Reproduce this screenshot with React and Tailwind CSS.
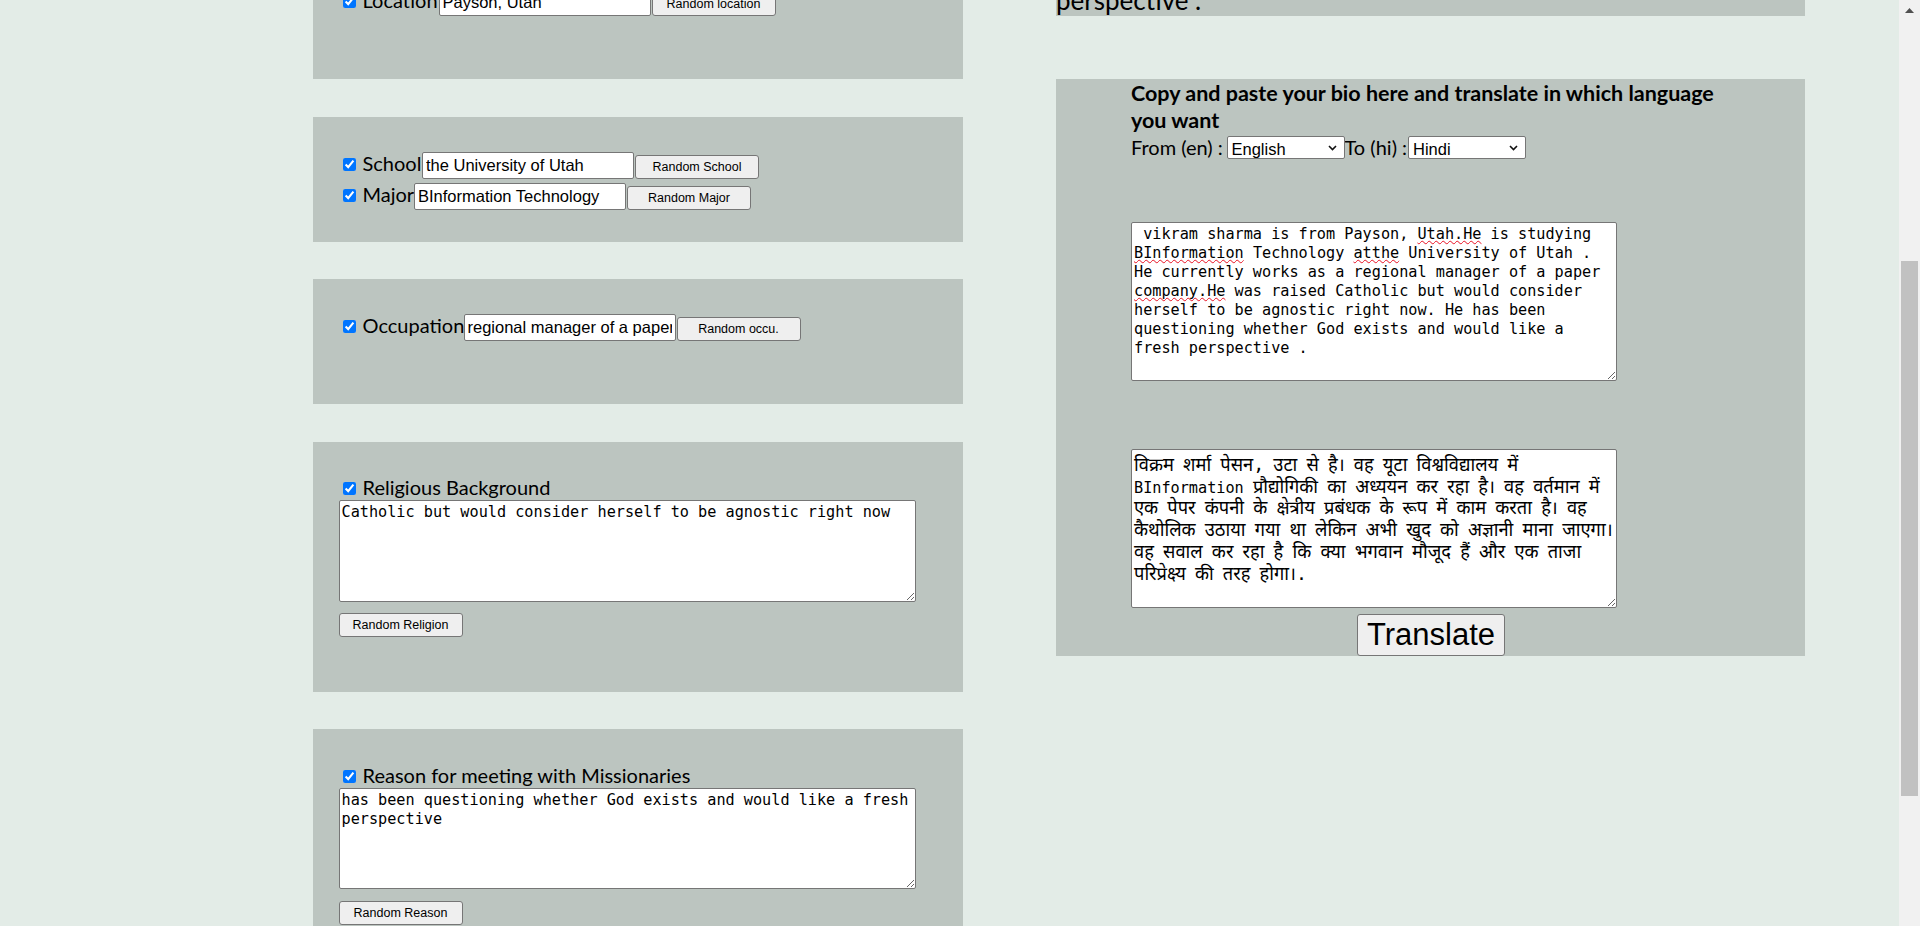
import React from "react";

const lato = "font-['Lato','Open_Sans',sans-serif]";
const arial = "font-['Liberation_Sans',Arial,sans-serif]";
const mono =
  "font-['DejaVu_Sans_Mono','Noto_Sans_Devanagari','Lohit_Devanagari','Noto_Sans',monospace]";
const panel = "bg-[#bcc5c0]";
const sq =
  "underline decoration-wavy decoration-[#e81123] decoration-1 underline-offset-[1px] [text-decoration-skip-ink:none]";

function Check() {
  return (
    <input
      type="checkbox"
      defaultChecked
      className="w-[13px] h-[13px] ml-[4px] mr-[3px] mb-[2px] shrink-0"
    />
  );
}

function Btn({ children, className = "" }) {
  return (
    <button
      className={
        "w-[124px] h-[24px] shrink-0 border border-[#767676] rounded-[3px] bg-[#efefef] text-[12.5px] leading-[14px] text-black " +
        arial +
        " " +
        className
      }
    >
      {children}
    </button>
  );
}

function FieldRow({ label, labelW, value, btn, className = "" }) {
  return (
    <div className={"flex items-baseline " + className}>
      <Check />
      <span
        className={
          "shrink-0 whitespace-nowrap pl-[4px] text-[20px] leading-[24px] text-black " +
          lato +
          " " +
          labelW
        }
      >
        {label}
      </span>
      <input
        readOnly
        defaultValue={value}
        className={
          "w-[212px] h-[27px] shrink-0 border border-[#767676] rounded-[2px] bg-white px-[3px] text-[16.5px] text-black " +
          arial
        }
      />
      <Btn className="ml-[1px]">{btn}</Btn>
    </div>
  );
}

function Sel({ value }) {
  return (
    <span className="relative inline-flex shrink-0">
      <select
        defaultValue={value}
        className={
          "appearance-none w-[118px] h-[23px] border border-[#767676] rounded-[2px] bg-white pl-[4px] text-[16.5px] text-black " +
          arial
        }
      >
        <option>{value}</option>
      </select>
      <svg
        className="absolute right-[8px] top-[9px] pointer-events-none"
        width="9"
        height="6"
        viewBox="0 0 9 6"
      >
        <path d="M1 1l3.5 3.5L8 1" stroke="#111" strokeWidth="1.6" fill="none" />
      </svg>
    </span>
  );
}

/* Hindi run: Devanagari at a larger size, spaces kept at the monospace width */
function Hi({ text }) {
  return text.split(/( )/).map((p, i) =>
    p === " " ? (
      <span key={i} className="text-[15.2px]">
        {" "}
      </span>
    ) : (
      <React.Fragment key={i}>{p}</React.Fragment>
    )
  );
}

export default function App() {
  return (
    <div className="w-[1920px] h-[926px] overflow-hidden flex bg-[#e3ece7]">
      <div className="flex-1 flex items-start pl-[313px] overflow-hidden">
        {/* Left column */}
        <div className="w-[650px] shrink-0 flex flex-col">
          <div className={"h-[79px] overflow-hidden pl-[25.5px] " + panel}>
            <FieldRow
              className="-mt-[12.5px]"
              label="Location"
              labelW="w-[80px]"
              value="Payson, Utah"
              btn="Random location"
            />
          </div>

          <div className={"mt-[38px] h-[125px] pl-[25.5px] pt-[34px] " + panel}>
            <FieldRow
              label="School"
              labelW="w-[63.5px]"
              value="the University of Utah"
              btn="Random School"
            />
            <FieldRow
              className="mt-[2.5px]"
              label="Major"
              labelW="w-[55.5px]"
              value="BInformation Technology"
              btn="Random Major"
            />
          </div>

          <div className={"mt-[37px] h-[125px] pl-[25.5px] pt-[34px] " + panel}>
            <FieldRow
              label="Occupation"
              labelW="w-[105px]"
              value="regional manager of a paper company"
              btn="Random occu."
            />
          </div>

          <div className={"mt-[38px] h-[250px] pl-[25.5px] pt-[33.3px] " + panel}>
            <div className="flex items-baseline">
              <Check />
              <span className={"pl-[4px] text-[20px] leading-[24px] text-black " + lato}>
                Religious Background
              </span>
            </div>
            <textarea
              readOnly
              spellCheck={false}
              defaultValue="Catholic but would consider herself to be agnostic right now"
              className={
                "block mt-[1.2px] w-[577px] h-[102px] border border-[#767676] rounded-[2px] bg-white p-[2px] text-[15.2px] leading-[19px] text-black resize overflow-hidden " +
                mono
              }
            />
            <Btn className="block mt-[11px]">Random Religion</Btn>
          </div>

          <div className={"mt-[37px] h-[250px] pl-[25.5px] pt-[33.8px] " + panel}>
            <div className="flex items-baseline">
              <Check />
              <span className={"pl-[4px] text-[20px] leading-[24px] text-black " + lato}>
                Reason for meeting with Missionaries
              </span>
            </div>
            <textarea
              readOnly
              spellCheck={false}
              wrap="off"
              defaultValue={
                "has been questioning whether God exists and would like a fresh\nperspective"
              }
              className={
                "block mt-[1.5px] w-[577px] h-[101px] border border-[#767676] rounded-[2px] bg-white p-[2px] text-[15.2px] leading-[19px] text-black resize overflow-hidden " +
                mono
              }
            />
            <Btn className="block mt-[12px]">Random Reason</Btn>
          </div>
        </div>

        {/* Right column */}
        <div className="ml-[93px] w-[749px] shrink-0 flex flex-col">
          <div className={"h-[16px] overflow-hidden " + panel}>
            <p className={"-mt-[15.5px] text-[26px] leading-[31px] text-black " + lato}>
              perspective .
            </p>
          </div>

          <div className={"mt-[63px] pl-[75px] pt-[1px] " + panel}>
            <div className="w-[600px]">
              <p className={"font-bold text-[21.5px] leading-[27px] text-black whitespace-nowrap " + lato}>
                Copy and paste your bio here and translate in which language
                <br />
                you want
              </p>
              <div
                className={
                  "mt-[1.3px] flex items-baseline text-[20px] leading-[24px] text-black " + lato
                }
              >
                <span className="w-[95.5px] shrink-0 whitespace-nowrap">From (en) :</span>
                <Sel value="English" />
                <span className="w-[63.5px] shrink-0 whitespace-nowrap">To (hi) :</span>
                <Sel value="Hindi" />
              </div>

              <div
                className={
                  "mt-[62.6px] w-[486px] h-[159px] border border-[#767676] rounded-[2px] bg-white px-[2px] pt-[2px] whitespace-pre text-[15.2px] leading-[19px] text-black resize overflow-hidden " +
                  mono
                }
              >
                {" vikram sharma is from Payson, "}
                <span className={sq}>Utah.He</span>
                {" is studying\n"}
                <span className={sq}>BInformation</span>
                {" Technology "}
                <span className={sq}>atthe</span>
                {" University of Utah .\nHe currently works as a regional manager of a paper\n"}
                <span className={sq}>company.He</span>
                {
                  " was raised Catholic but would consider\nherself to be agnostic right now. He has been\nquestioning whether God exists and would like a\nfresh perspective ."
                }
              </div>

              <div
                className={
                  "mt-[68.4px] w-[486px] h-[158.6px] border border-[#767676] rounded-[2px] bg-white px-[2px] pt-[4.5px] whitespace-pre text-[18.3px] leading-[19.8px] text-black resize overflow-hidden " +
                  mono
                }
              >
                <Hi text="विक्रम शर्मा पेसन, उटा से है। वह यूटा विश्वविद्यालय में" />
                {"\n"}
                <span className="text-[15.2px]">BInformation </span>
                <Hi text="प्रौद्योगिकी का अध्ययन कर रहा है। वह वर्तमान में" />
                {"\n"}
                <Hi text="एक पेपर कंपनी के क्षेत्रीय प्रबंधक के रूप में काम करता है। वह" />
                {"\n"}
                <Hi text="कैथोलिक उठाया गया था लेकिन अभी खुद को अज्ञानी माना जाएगा।" />
                {"\n"}
                <Hi text="वह सवाल कर रहा है कि क्या भगवान मौजूद हैं और एक ताजा" />
                {"\n"}
                <Hi text="परिप्रेक्ष्य की तरह होगा।." />
              </div>

              <div className="flex justify-center mt-[6.2px]">
                <button
                  className={
                    "w-[148px] h-[42px] border border-[#767676] rounded-[3px] bg-[#efefef] text-[31px] leading-[36px] text-black " +
                    arial
                  }
                >
                  Translate
                </button>
              </div>
            </div>
          </div>
        </div>
      </div>

      {/* Scrollbar */}
      <div className="w-[21px] h-full shrink-0 bg-[#f1f1f1] flex flex-col items-center">
        <svg className="mt-[8px]" width="9" height="5" viewBox="0 0 9 5">
          <path d="M0 5L4.5 0L9 5Z" fill="#505050" />
        </svg>
        <div className="mt-[248px] w-[17px] h-[535px] bg-[#c1c1c1]" />
      </div>
    </div>
  );
}
